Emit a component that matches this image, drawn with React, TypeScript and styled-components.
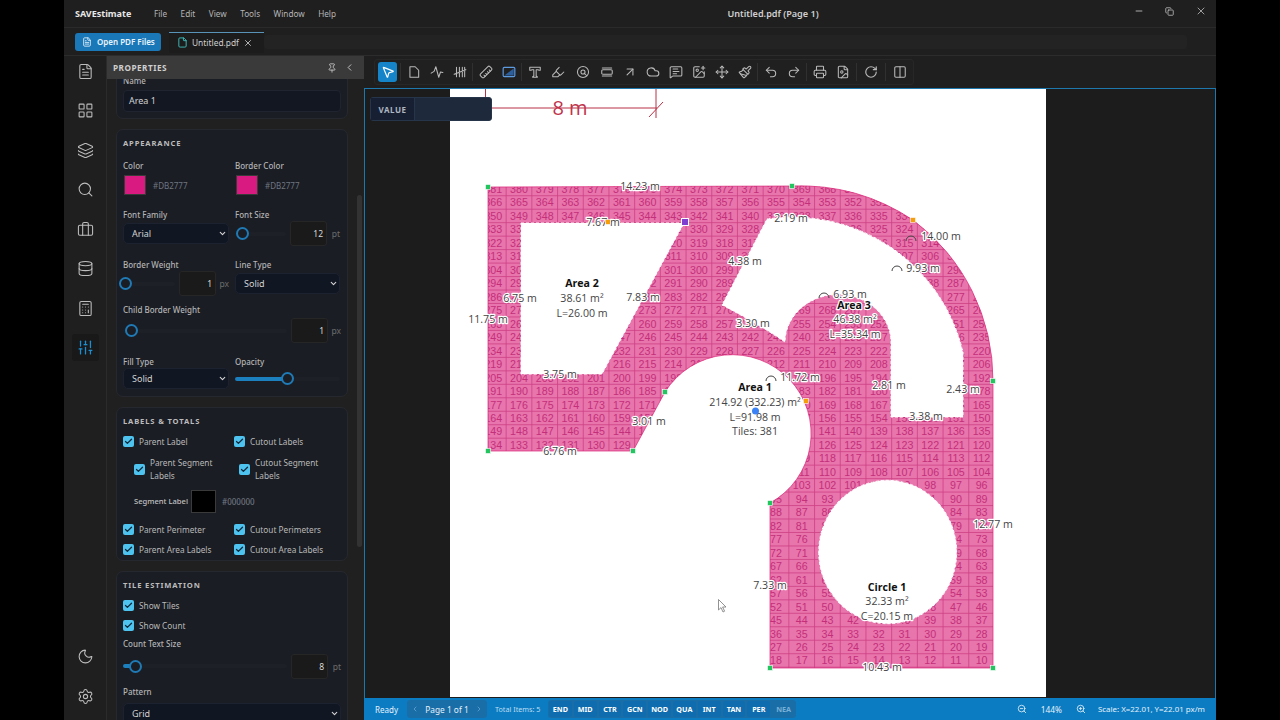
import React from "react";
import styled, { createGlobalStyle } from "styled-components";
import {
  FileText, LayoutGrid, Layers, Search, Briefcase, Database, Calculator, SlidersVertical, Moon, Settings,
  Pin, ChevronLeft, ChevronRight, ChevronDown, X, File, ZoomIn, ZoomOut, Minus, Copy, MousePointer2, Ruler,
  Highlighter, ArrowUpRight, Cloud, MessageSquareText, ImagePlus, Move, Paintbrush, Undo2, Redo2, Printer,
  FileImage, RotateCw, Columns2, Check,
} from "lucide-react";

const Global = createGlobalStyle`
  html, body { margin: 0; padding: 0; background: #000; height: 100%; overflow: hidden; }
  #root { width: 1280px; height: 720px; }
  * { box-sizing: border-box; }
`;

const Screen = styled.div`
  width: 1280px; height: 720px; background: #000; display: flex; justify-content: center;
  font-family: "Noto Sans", "Open Sans", sans-serif; color: #ccc;
`;
const Win = styled.div`
  width: 1152px; height: 720px; background: #1f1f1f; display: flex; flex-direction: column; overflow: hidden;
`;

/* title bar */
const TitleBar = styled.div`
  height: 28px; flex: none; display: flex; align-items: center; padding-left: 11px; border-bottom: 1px solid #2a2a2a;
`;
const Brand = styled.div`font-size: 9px; font-weight: 700; color: #e8e8e8; width: 79px;`;
const Menu = styled.div`font-size: 8.2px; color: #b5b5b5; margin-right: 13.5px;`;
const DocTitle = styled.div`font-size: 9.1px; font-weight: 600; color: #d0d0d0; margin-left: 378px;`;
const WinButtons = styled.div`margin-left: auto; display: flex; align-self: flex-start; height: 22px;`;
const WinButton = styled.div`
  width: 31px; height: 22px; display: flex; align-items: center; justify-content: center; color: #c8c8c8;
`;

/* tab bar */
const TabBar = styled.div`
  height: 28px; flex: none; display: flex; align-items: center; padding-left: 11px; border-bottom: 1px solid #2c2c2c;
`;
const OpenButton = styled.div`
  width: 86px; height: 18px; background: #1b78b8; border-radius: 3px; display: flex; align-items: center; gap: 5px;
  padding-left: 7px; font-size: 8px; font-weight: 600; color: #eaf4fb;
`;
const Tab = styled.div`
  width: 95px; height: 21px; margin-left: 8px; margin-top: 1px; border-top: 1px solid #5a93b8; background: #1c1c1c;
  display: flex; align-items: center; padding-left: 8px; gap: 4px; font-size: 8.4px; color: #cfcfcf;
`;
const TabFill = styled.div`
  flex: 1; height: 14px; margin: 0 29px 0 0; border-radius: 3px; background: #232323;
`;

const Main = styled.div`flex: 1; display: flex; min-height: 0;`;

/* sidebar */
const Side = styled.div`
  width: 43px; flex: none; background: #1f1f1f; border-right: 1px solid #2b2b2b; display: flex; flex-direction: column;
  align-items: center; padding-top: 2px;
`;
const SideItem = styled.div<{ $on?: boolean; $mb?: number }>`
  width: 27px; height: 27px; margin-bottom: ${(p) => p.$mb ?? 12.45}px; flex: none; display: flex; align-items: center; justify-content: center; border-radius: 3px;
  color: ${(p) => (p.$on ? "#1b8fd0" : "#bdbdbd")}; background: ${(p) => (p.$on ? "#191919" : "transparent")};
`;
const SideGap = styled.div`flex: 1;`;

/* properties panel */
const Panel = styled.div`
  width: 257px; flex: none; display: flex; flex-direction: column; position: relative; background: #202020; overflow: hidden;
`;
const PanelHead = styled.div`
  height: 23px; flex: none; background: #3a3a3b; display: flex; align-items: center; padding: 0 9px 0 6px; gap: 7.5px; z-index: 2;
`;
const PanelTitle = styled.div`font-size: 8.2px; font-weight: 700; letter-spacing: 0.5px; color: #cfcfcf; flex: 1;`;
const PanelBody = styled.div`flex: 1; padding: 0 16px 0 9px; min-height: 0;`;
const ScrollThumb = styled.div`
  position: absolute; right: 2px; top: 139px; width: 5px; height: 352px; border-radius: 3px; background: #333;
`;
const Card = styled.div<{ $first?: boolean; $pb?: number; $mt?: number }>`
  background: #1a1d24; border: 1px solid #25282e; border-radius: 7px; padding: 8px 6px ${(p) => p.$pb ?? 7}px;
  margin-top: ${(p) => (p.$first ? -13 : p.$mt ?? 10)}px; height: ${(p) => (p.$first ? "53px" : "auto")};
`;
const CardTitle = styled.div`
  font-size: 7.6px; line-height: 11px; font-weight: 700; letter-spacing: 0.85px; color: #bcbcbc; text-transform: uppercase;
`;
const Label = styled.div`font-size: 8px; line-height: 11px; color: #b4b4b4; font-weight: 500;`;
const NameInput = styled.div`
  height: 22px; margin-top: 4px; background: #131722; border: 1px solid #1f2430; border-radius: 4px; padding-left: 5px;
  font-size: 9px; line-height: 20px; color: #d2d2d2;
`;
const Row = styled.div<{ $mt: number }>`
  display: grid; grid-template-columns: 106px 105px; column-gap: 6px; margin-top: ${(p) => p.$mt}px;
`;
const Stack = styled.div<{ $mt: number }>`margin-top: ${(p) => p.$mt}px;`;
const SwatchRow = styled.div`display: flex; align-items: center; gap: 7px; margin-top: 4px; padding-left: 1px;`;
const Swatch = styled.div<{ $c: string; $w: number; $h: number }>`
  width: ${(p) => p.$w}px; height: ${(p) => p.$h}px; background: ${(p) => p.$c}; border: 1px solid #3a3a3a; flex: none;
`;
const Hex = styled.div`font-size: 8px; color: #6f7580;`;
const Control = styled.div<{ $h?: number; $mt?: number }>`
  height: ${(p) => p.$h ?? 25}px; margin-top: ${(p) => p.$mt ?? 1}px; display: flex; align-items: center; position: relative;
`;
const Select = styled.div`
  width: 100%; height: 21px; background: #111623; border: 1px solid #1c2230; border-radius: 5px; padding: 0 1px 0 8px;
  display: flex; align-items: center; justify-content: space-between; font-size: 9px; color: #d4d4d4;
`;
const Slider = styled.div`flex: 1; height: 4px; position: relative; border-radius: 2px; background: #1d2026;`;
const SliderFill = styled.div<{ $w: number }>`
  position: absolute; left: 0; top: 0; bottom: 0; width: ${(p) => p.$w}px; border-radius: 2px; background: #1c7fbe;
`;
const Thumb = styled.div<{ $x: number }>`
  position: absolute; top: 50%; left: ${(p) => p.$x}px; width: 13px; height: 13px; margin: -6.5px 0 0 -6.5px; border-radius: 50%;
  border: 2px solid #1f7ab5; background: #1a1d24;
`;
const NumBox = styled.div`
  width: 37px; height: 25px; margin-left: 4px; background: #1a1a1a; border: 1px solid #262626; border-radius: 3px; font-size: 8.5px; color: #d8d8d8;
  display: flex; align-items: center; justify-content: flex-end; padding-right: 3px;
`;
const Unit = styled.div`font-size: 8.5px; color: #6d6d6d; width: 13px; text-align: right;`;
const CheckRow = styled.div<{ $mt: number; $indent?: number }>`
  display: flex; align-items: center; gap: 5px; margin-top: ${(p) => p.$mt}px; margin-left: ${(p) => p.$indent ?? 0}px;
  font-size: 8.25px; line-height: 13.5px; color: #b9b9b9;
`;
const Box = styled.div`
  width: 11px; height: 11px; flex: none; background: #4fc3f0; border-radius: 2px; display: flex; align-items: center; justify-content: center; color: #0d2a3c;
`;
const CheckGrid = styled.div<{ $mt: number }>`
  display: grid; grid-template-columns: 111px 106px; margin-top: ${(p) => p.$mt}px;
`;
const SegRow = styled.div`
  display: flex; align-items: center; margin: 7px 0 0 11px; font-size: 7.6px; font-weight: 500; color: #c0c0c0; height: 23px;
`;
const SegName = styled.div`width: 57px;`;
const SegHex = styled.div`font-size: 8px; color: #6f7580; margin-left: 6px;`;

/* right */
const Work = styled.div`flex: 1; display: flex; flex-direction: column; min-width: 0;`;
const ToolRow = styled.div`height: 32px; flex: none; padding: 3px 0 3px 10px; display: flex; align-items: stretch;`;
const ToolBox = styled.div`
  width: 540px; background: #202020; border: 1px solid #272727; border-radius: 3px; display: flex; align-items: center; padding-left: 1px;
`;
const Tool = styled.div<{ $mr?: number }>`
  width: 23px; height: 20px; display: flex; align-items: center; justify-content: center; color: #b9b9b9; margin-right: ${(p) => p.$mr ?? 0}px;
`;
const ToolOn = styled.div`
  width: 19px; height: 20px; background: #1684c9; border-radius: 3px; display: flex; align-items: center; justify-content: center; color: #fff;
  margin: 0 2px;
`;
const Sep = styled.div<{ $m?: number }>`width: 1px; height: 18px; background: #303030; margin: 0 ${(p) => p.$m ?? 1}px;`;

const Canvas = styled.div`
  flex: 1; min-height: 0; background: #1c1c1c; border: 1px solid #1f78ad; border-bottom: 0; position: relative; padding-left: 85px; overflow: hidden;
`;
const Page = styled.div`width: 596px; height: 608px; background: #fff;`;
const Sheet = styled.svg`display: block; width: 596px; height: 608px;`;
const ValueBox = styled.div`
  position: absolute; left: 5px; top: 8px; width: 122px; height: 24px; background: #1e293b; border: 1px solid #27354a; border-radius: 3px; display: flex;
`;
const ValueTag = styled.div`
  width: 44px; background: #172033; border-right: 1px solid #27354a; font-size: 8px; font-weight: 700; letter-spacing: .5px; color: #aeb6c2;
  display: flex; align-items: center; justify-content: center;
`;

const TileNum = styled.text`font-family: "Liberation Sans", Arial, sans-serif; font-size: 10.7px; fill: #c42f7a; text-anchor: middle; dominant-baseline: central;`;
const Dim = styled.text<{ $b?: boolean }>`
  font-family: "Open Sans", "Noto Sans", sans-serif; font-size: 10.6px; fill: ${(p) => (p.$b ? "#111" : "#444")}; font-weight: ${(p) => (p.$b ? 700 : 400)};
  text-anchor: middle; dominant-baseline: central; paint-order: stroke; stroke: #fff; stroke-width: 2.4px; stroke-linejoin: round;
`;
const RedText = styled.text`font-family: "Open Sans", "Noto Sans", sans-serif; font-size: 20px; fill: #c0334b; text-anchor: middle; dominant-baseline: central;`;

/* status */
const Status = styled.div`
  height: 22px; flex: none; background: #0b7cc2; display: flex; align-items: center; padding: 0 11px 0 11px; color: #e4f1fa; font-size: 8px;
`;
const Ready = styled.div`width: 32px;`;
const Pager = styled.div`
  width: 80px; height: 18px; background: #1a6ea8; border-radius: 3px; display: flex; align-items: center; justify-content: center; gap: 6px; color: #e4f1fa;
  font-size: 8.3px;
`;
const Faint = styled.span`color: #6fb1dc; display: flex;`;
const Total = styled.div`margin-left: 8px; width: 53px; color: #bcdcf2; font-size: 7.2px;`;
const Chips = styled.div`
  height: 18px; background: #1a6ea8; border-radius: 3px; display: flex; align-items: center; padding: 0 1px; gap: 2px;
`;
const Chip = styled.div<{ $off?: boolean }>`
  width: 22.8px; height: 16px; border-radius: 2px; display: flex; align-items: center; justify-content: center; font-size: 7.2px; font-weight: 700;
  color: ${(p) => (p.$off ? "#78afd6" : "#fff")}; background: ${(p) => (p.$off ? "transparent" : "#0f6cae")};
`;
const StatusRight = styled.div`margin-left: auto; display: flex; align-items: center; gap: 14px;`;
const Pct = styled.div`font-size: 8.3px;`;
const Scale = styled.div`font-size: 7.9px; margin-left: -2px;`;

/* --- custom drawn icons --- */
const I: React.FC<{ children: React.ReactNode }> = ({ children }) => (
  <svg width="14" height="14" viewBox="0 0 24 24" fill="none" stroke="currentColor" strokeWidth="1.8" strokeLinecap="round" strokeLinejoin="round">
    {children}
  </svg>
);
const IconPoly = () => <I><path d="M5 3h9l6 6v12H5z" /></I>;
const IconWave = () => <I><path d="M2 14l5-3 3-8 5 18 3-9 4 1" /></I>;
const IconTally = () => <I><path d="M6 4v16M11 4v16M16 4v16M20 4v16M2 16L22 8" /></I>;
const IconArea = () => (
  <svg width="14" height="14" viewBox="0 0 24 24" fill="none">
    <rect x="2" y="4" width="20" height="16" rx="2" stroke="#5d9be0" strokeWidth="2" />
    <path d="M4 18L20 6v12z" fill="#2b5f9e" />
  </svg>
);
const IconT = () => <I><path d="M3 4h18v5h-2l-2-1h-3v11l2 1v1H8v-1l2-1V8H7L5 9H3z" /></I>;
const IconBar = () => <I><path d="M4 5h16M4 19h16" /><rect x="3" y="8" width="18" height="8" rx="2" /></I>;
const IconDial = () => <I><circle cx="12" cy="12" r="9.5" /><circle cx="12" cy="12" r="3.5" /><path d="M14 14l4 4" /></I>;

const tools1 = [<IconPoly />, <IconWave />, <IconTally />];
const tools2 = [<Ruler size={14} strokeWidth={1.8} style={{ transform: "rotate(90deg)" }} />, <IconArea />];
const tools3a = [<IconT />, <Highlighter size={14} strokeWidth={1.8} />];
const tools3b = [
  <IconDial />, <IconBar />,
  <ArrowUpRight size={14} strokeWidth={1.8} />, <Cloud size={14} strokeWidth={1.8} />, <MessageSquareText size={14} strokeWidth={1.8} />,
  <ImagePlus size={14} strokeWidth={1.8} />, <Move size={14} strokeWidth={1.8} />, <Paintbrush size={14} strokeWidth={1.8} />,
];
const tools4 = [<Undo2 size={14} strokeWidth={1.8} />, <Redo2 size={14} strokeWidth={1.8} />];
const tools5 = [<Printer size={14} strokeWidth={1.8} />, <FileImage size={14} strokeWidth={1.8} />];

/* --- drawing data --- */
const X0 = 519, DX = 25.7, Y0 = 189, DY = 13.47;
type Seg = [number, number];
const F: Seg[] = [[11, 18]];
const G: Seg[] = [[10, 12], [17, 18]];
const H: Seg[] = [[10, 18]];
const rows: [number, Seg[]][] = [
  [381, [[-1, 13]]], [366, [[-1, 14]]], [350, [[-1, 15]]],
  [333, [[-1, 0], [6, 10], [13, 16]]], [322, [[-1, 0], [6, 9], [14, 16]]], [313, [[-1, 0], [6, 9], [15, 17]]],
  [304, [[-1, 0], [5, 9], [16, 18]]], [294, [[-1, 0], [5, 8], [16, 17]]], [286, [[-1, 0], [5, 9], [15, 18]]],
  [275, [[-1, 0], [5, 8], [11, 13], [16, 18]]], [263, [[-1, 0], [4, 9], [11, 14], [17, 18]]],
  [249, [[-1, 0], [4, 14], [17, 18]]], [234, [[-1, 0], [4, 14], [17, 18]]],
  [219, [[-1, 0], [3, 7], [10, 14], [17, 18]]], [205, [[-1, 6], [11, 14], [17, 18]]], [191, [[-1, 6], [11, 14], [17, 18]]],
  [177, [[-1, 5], [11, 14], [17, 18]]], [164, [[-1, 5], [11, 18]]], [149, [[-1, 5], [11, 18]]], [134, [[-1, 5], [11, 18]]],
  [119, F], [111, F], [103, F], [95, [[10, 13], [16, 18]]], [88, [[10, 12], [16, 18]]],
  [82, G], [77, G], [72, G], [67, G], [62, G], [57, G], [52, [[10, 13], [16, 18]]],
  [45, H], [36, H], [27, H], [18, H], [9, H],
];
const tiles = rows.flatMap(([start, segs], r) => {
  let n = start;
  const out: { n: number; x: number; y: number }[] = [];
  segs.forEach(([a, b]) => {
    for (let k = a; k <= b; k++) out.push({ n: n--, x: X0 + k * DX, y: Y0 + r * DY });
  });
  return out;
});

const parent = "M488 187L792 186A205 205 0 0 1 913 220A200 200 0 0 1 993 381L993 668L770 668L770 503A79 79 0 1 0 665 392L633 451L488 451Z";
const area2 = "M521 223L684 223L602 374L521 374Z";
const area3 = "M767 219A175 175 0 0 1 963 352L963 417L891 417L891 343A53 48 0 0 0 785 342Q755 322 722 305Z";
const circle1 = "M818.7 552a69 71.7 0 1 0 138 0a69 71.7 0 1 0 -138 0Z";
const all = [parent, area2, area3, circle1].join("");

const dims: [string, number, number, boolean?][] = [
  ["14.23 m", 640, 186], ["7.67 m", 603, 222], ["2.19 m", 791, 218], ["4.38 m", 745, 261], ["14.00 m", 941, 236], ["9.93 m", 923, 268],
  ["6.93 m", 850, 294], ["Area 3", 854, 304.5, true], ["46.38 m²", 855, 319], ["L=35.34 m", 855, 334],
  ["Area 2", 582, 283, true], ["38.61 m²", 582, 298], ["L=26.00 m", 582, 313], ["6.75 m", 520, 298], ["7.83 m", 643, 297],
  ["11.75 m", 488, 319], ["3.30 m", 753, 323], ["11.72 m", 800, 377], ["2.81 m", 889, 385], ["2.43 m", 963, 389], ["3.75 m", 560, 374],
  ["3.38 m", 926, 416], ["Area 1", 755, 387, true], ["214.92 (332.23) m²", 755, 402], ["L=91.98 m", 755, 417], ["Tiles: 381", 755, 431],
  ["3.01 m", 649, 421], ["6.76 m", 560, 451], ["12.77 m", 993, 524], ["7.33 m", 770, 585],
  ["Circle 1", 887, 587, true], ["32.33 m²", 887, 601], ["C=20.15 m", 887, 616], ["10.43 m", 882, 667],
];
const greens = [[488, 187], [792, 186], [993, 381], [993, 668], [770, 668], [770, 503], [665, 392], [633, 451], [488, 451]];
const oranges = [[913, 220], [806, 401], [608, 222]];
const arcs = [[911, 241], [897, 271], [824, 298], [771, 381]];

const Drawing = () => (
  <Sheet viewBox="450 89 596 608">
    <defs>
      <clipPath id="shape"><path d={all} clipRule="evenodd" /></clipPath>
    </defs>
    <g stroke="#b83247" fill="none" strokeWidth="1">
      <path d="M485.5 89V97M488 108H657M656 89V118M649 117L663 102" />
    </g>
    <RedText x="570" y="107">8 m</RedText>
    <path d={all} fill="#e875ad" fillRule="evenodd" />
    <g clipPath="url(#shape)">
      <g stroke="#c0246f" strokeWidth="0.8" opacity="0.65">
        {Array.from({ length: 24 }, (_, i) => <line key={i} x1={X0 + (i - 2) * DX + DX / 2} x2={X0 + (i - 2) * DX + DX / 2} y1="180" y2="680" />)}
        {Array.from({ length: 38 }, (_, i) => <line key={i} y1={Y0 + i * DY - DY / 2} y2={Y0 + i * DY - DY / 2} x1="480" x2="1000" />)}
      </g>
      {tiles.map((t) => <TileNum key={t.n} x={t.x} y={t.y}>{t.n}</TileNum>)}
    </g>
    <path d={parent} fill="none" stroke="#db2777" strokeWidth="1" opacity="0.7" />
    <g fill="none" stroke="#fff" strokeWidth="1" strokeDasharray="3 2">
      <path d={area2} /><path d={area3} /><path d={circle1} />
    </g>
    {arcs.map(([x, y]) => <path key={x} d={`M${x - 5} ${y}a5 5 0 0 1 10 0`} fill="none" stroke="#444" strokeWidth="1" />)}
    {dims.map(([s, x, y, b]) => <Dim key={s} x={x} y={y} $b={b}>{s}</Dim>)}
    {greens.map(([x, y]) => <rect key={`${x}${y}`} x={x - 2.5} y={y - 2.5} width="5" height="5" fill="#22c55e" stroke="#fff" strokeWidth="0.6" />)}
    {oranges.map(([x, y]) => <rect key={`${x}${y}`} x={x - 2.5} y={y - 2.5} width="5" height="5" fill="#f59e0b" stroke="#fff" strokeWidth="0.6" />)}
    <rect x="681.5" y="218.5" width="7" height="7" fill="#7c3fd0" stroke="#fff" strokeWidth="1" />
    <circle cx="755.5" cy="411" r="3.5" fill="#3b82f6" />
    <path d="M718.5 599.5V610L721 607.6L723 612L724.6 611.2L722.6 607H726Z" fill="#fff" stroke="#777" strokeWidth="0.8" />
  </Sheet>
);

const Ck: React.FC<{ label: React.ReactNode; mt?: number; indent?: number }> = ({ label, mt = 0, indent }) => (
  <CheckRow $mt={mt} $indent={indent}>
    <Box><Check size={9} strokeWidth={3.5} /></Box>
    <div>{label}</div>
  </CheckRow>
);

const sideTop = [FileText, LayoutGrid, Layers, Search, Briefcase, Database, Calculator];
const chips = ["END", "MID", "CTR", "GCN", "NOD", "QUA", "INT", "TAN", "PER"];
const menus = ["File", "Edit", "View", "Tools", "Window", "Help"];
const PINK = "#d91a80";

export default function App() {
  return (
    <Screen>
      <Global />
      <Win>
        <TitleBar>
          <Brand>SAVEstimate</Brand>
          {menus.map((m) => <Menu key={m}>{m}</Menu>)}
          <DocTitle>Untitled.pdf (Page 1)</DocTitle>
          <WinButtons>
            <WinButton><Minus size={10} /></WinButton>
            <WinButton><Copy size={9} /></WinButton>
            <WinButton><X size={12} strokeWidth={1.5} /></WinButton>
          </WinButtons>
        </TitleBar>
        <TabBar>
          <OpenButton><FileText size={10} />Open PDF Files</OpenButton>
          <Tab>
            <File size={11} color="#3fc1c0" />
            Untitled.pdf
            <X size={10} />
          </Tab>
          <TabFill />
        </TabBar>
        <Main>
          <Side>
            {sideTop.map((Ic, i) => <SideItem key={i}><Ic size={17} strokeWidth={1.5} /></SideItem>)}
            <SideItem $on><SlidersVertical size={17} strokeWidth={1.8} /></SideItem>
            <SideGap />
            <SideItem $mb={13}><Moon size={17} strokeWidth={1.5} /></SideItem>
            <SideItem $mb={9.6}><Settings size={17} strokeWidth={1.5} /></SideItem>
          </Side>
          <Panel>
            <PanelHead>
              <PanelTitle>PROPERTIES</PanelTitle>
              <Pin size={10} />
              <ChevronLeft size={11} />
            </PanelHead>
            <PanelBody>
              <Card $first>
                <Label>Name</Label>
                <NameInput>Area 1</NameInput>
              </Card>
              <Card>
                <CardTitle>Appearance</CardTitle>
                <Row $mt={11}>
                  <div>
                    <Label>Color</Label>
                    <SwatchRow><Swatch $c={PINK} $w={22} $h={20} /><Hex>#DB2777</Hex></SwatchRow>
                  </div>
                  <div>
                    <Label>Border Color</Label>
                    <SwatchRow><Swatch $c={PINK} $w={22} $h={20} /><Hex>#DB2777</Hex></SwatchRow>
                  </div>
                </Row>
                <Row $mt={14}>
                  <div>
                    <Label>Font Family</Label>
                    <Control><Select>Arial<ChevronDown size={9} strokeWidth={3} /></Select></Control>
                  </div>
                  <div>
                    <Label>Font Size</Label>
                    <Control>
                      <Slider><Thumb $x={7} /></Slider>
                      <NumBox>12</NumBox>
                      <Unit>pt</Unit>
                    </Control>
                  </div>
                </Row>
                <Row $mt={13}>
                  <div>
                    <Label>Border Weight</Label>
                    <Control>
                      <Slider><Thumb $x={2} /></Slider>
                      <NumBox>1</NumBox>
                      <Unit>px</Unit>
                    </Control>
                  </div>
                  <div>
                    <Label>Line Type</Label>
                    <Control><Select>Solid<ChevronDown size={9} strokeWidth={3} /></Select></Control>
                  </div>
                </Row>
                <Stack $mt={8}>
                  <Label>Child Border Weight</Label>
                  <Control $mt={3}>
                    <Slider><Thumb $x={8} /></Slider>
                    <NumBox>1</NumBox>
                    <Unit>px</Unit>
                  </Control>
                </Stack>
                <Row $mt={13}>
                  <div>
                    <Label>Fill Type</Label>
                    <Control $h={21}><Select>Solid<ChevronDown size={9} strokeWidth={3} /></Select></Control>
                  </div>
                  <div>
                    <Label>Opacity</Label>
                    <Control $h={21}>
                      <Slider><SliderFill $w={52} /><Thumb $x={52} /></Slider>
                    </Control>
                  </div>
                </Row>
              </Card>
              <Card $pb={4}>
                <CardTitle>Labels &amp; Totals</CardTitle>
                <CheckGrid $mt={8}>
                  <Ck label="Parent Label" />
                  <Ck label="Cutout Labels" />
                </CheckGrid>
                <CheckGrid $mt={7}>
                  <Ck label={<>Parent Segment<br />Labels</>} indent={11} />
                  <Ck label={<>Cutout Segment<br />Labels</>} indent={5} />
                </CheckGrid>
                <SegRow>
                  <SegName>Segment Label</SegName>
                  <Swatch $c="#000" $w={25} $h={23} />
                  <SegHex>#000000</SegHex>
                </SegRow>
                <CheckGrid $mt={10}>
                  <Ck label="Parent Perimeter" />
                  <Ck label="Cutout Perimeters" />
                </CheckGrid>
                <CheckGrid $mt={6.5}>
                  <Ck label="Parent Area Labels" />
                  <Ck label="Cutout Area Labels" />
                </CheckGrid>
              </Card>
              <Card>
                <CardTitle>Tile Estimation</CardTitle>
                <Ck label="Show Tiles" mt={8} />
                <Ck label="Show Count" mt={6.5} />
                <Stack $mt={5}>
                  <Label>Count Text Size</Label>
                  <Control $mt={5}>
                    <Slider><SliderFill $w={12} /><Thumb $x={12} /></Slider>
                    <NumBox>8</NumBox>
                    <Unit>pt</Unit>
                  </Control>
                </Stack>
                <Stack $mt={7}>
                  <Label>Pattern</Label>
                  <Control $mt={4}><Select>Grid<ChevronDown size={9} strokeWidth={3} /></Select></Control>
                </Stack>
              </Card>
            </PanelBody>
            <ScrollThumb />
          </Panel>
          <Work>
            <ToolRow>
              <ToolBox>
                <ToolOn><MousePointer2 size={14} strokeWidth={2} /></ToolOn>
                <Sep />
                {tools1.map((t, i) => <Tool key={i}>{t}</Tool>)}
                <Sep />
                {tools2.map((t, i) => <Tool key={i}>{t}</Tool>)}
                <Sep />
                {tools3a.map((t, i) => <Tool key={i} $mr={i === 1 ? 2 : 0}>{t}</Tool>)}
                {tools3b.map((t, i) => <Tool key={i} $mr={i === 0 ? 1 : 0}>{t}</Tool>)}
                <Sep />
                {tools4.map((t, i) => <Tool key={i}>{t}</Tool>)}
                <Sep />
                {tools5.map((t, i) => <Tool key={i}>{t}</Tool>)}
                <Sep $m={2} />
                <Tool><RotateCw size={14} strokeWidth={2} /></Tool>
                <Sep $m={2.5} />
                <Tool><Columns2 size={14} strokeWidth={1.8} /></Tool>
              </ToolBox>
            </ToolRow>
            <Canvas>
              <Page><Drawing /></Page>
              <ValueBox><ValueTag>VALUE</ValueTag></ValueBox>
            </Canvas>
            <Status>
              <Ready>Ready</Ready>
              <Pager>
                <Faint><ChevronLeft size={8} /></Faint>
                Page 1 of 1
                <Faint><ChevronRight size={8} /></Faint>
              </Pager>
              <Total>Total Items: 5</Total>
              <Chips>
                {chips.map((c) => <Chip key={c}>{c}</Chip>)}
                <Chip $off>NEA</Chip>
              </Chips>
              <StatusRight>
                <ZoomOut size={10} />
                <Pct>144%</Pct>
                <ZoomIn size={10} />
                <Scale>Scale: X=22.01, Y=22.01 px/m</Scale>
              </StatusRight>
            </Status>
          </Work>
        </Main>
      </Win>
    </Screen>
  );
}
